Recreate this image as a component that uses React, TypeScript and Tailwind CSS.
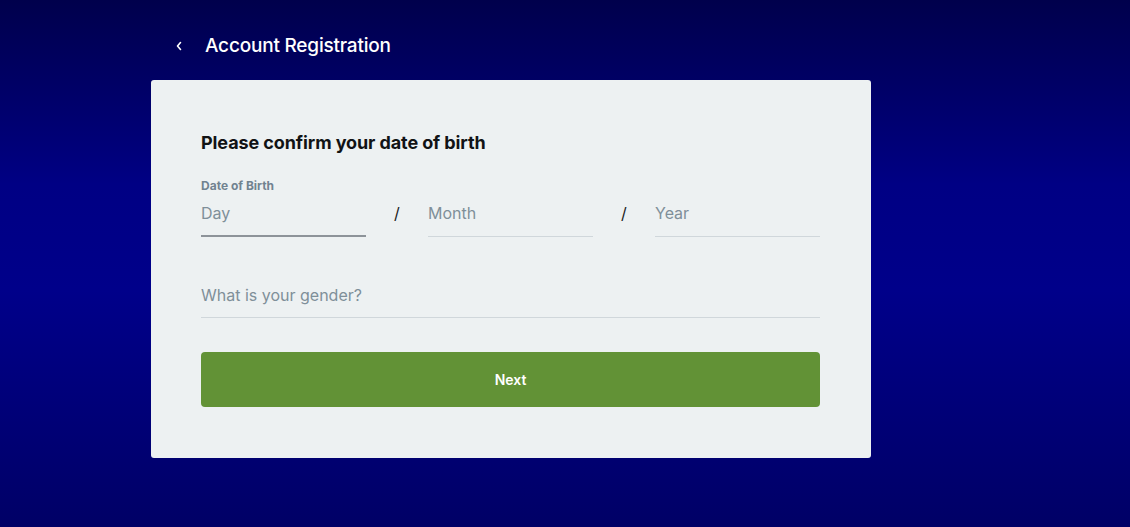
export default function App() {
  return (
    <div className="min-h-[527px] w-full bg-[linear-gradient(180deg,#00004c_0%,#000084_35%,#00008a_55%,#000066_100%)] font-['Inter',sans-serif]">
      <div className="ml-[151px] w-[720px] pt-[34px]">
        {/* Header */}
        <div className="flex h-[24px] items-center">
          <svg className="ml-[24px] h-[10px] w-[8px]" viewBox="0 0 8 10" fill="none">
            <path d="M5.5 1.5 L2.5 5 L5.5 8.5" stroke="white" strokeWidth="1.6" strokeLinecap="round" strokeLinejoin="round" />
          </svg>
          <h1 className="ml-[22px] text-[19px] font-medium leading-[24px] tracking-[-0.2px] text-white">
            Account Registration
          </h1>
        </div>

        {/* Card */}
        <div className="mt-[22px] rounded-[3px] bg-[#edf1f2] px-[50px] pt-[51px] pb-[51px]">
          <h2 className="text-[18px] font-bold leading-[24px] tracking-[-0.1px] text-[#111315]">
            Please confirm your date of birth
          </h2>

          <label className="mt-[23px] block pt-[1px] text-[12px] font-bold leading-[14px] text-[#718390]">
            Date of Birth
          </label>
          <div className="-mt-[1px] flex items-stretch">
            <input
              placeholder="Day"
              className="h-[45px] w-[165px] border-b-2 border-[#8d9399] bg-transparent pb-[2px] text-[16px] text-[#222] outline-none placeholder:text-[#7f8f99]"
            />
            <span className="flex w-[62px] items-center justify-center pb-[3px] text-[16px] text-[#222]">/</span>
            <input
              placeholder="Month"
              className="h-[45px] w-[165px] border-b border-[#d0d7db] bg-transparent pb-[2px] text-[16px] text-[#222] outline-none placeholder:text-[#7f8f99]"
            />
            <span className="flex w-[62px] items-center justify-center pb-[3px] text-[16px] text-[#222]">/</span>
            <input
              placeholder="Year"
              className="h-[45px] w-[165px] border-b border-[#d0d7db] bg-transparent pb-[2px] text-[16px] text-[#222] outline-none placeholder:text-[#7f8f99]"
            />
          </div>

          <input
            placeholder="What is your gender?"
            className="mt-[37px] block h-[44px] w-[619px] border-b border-[#d0d7db] bg-transparent pb-[2px] text-[16px] text-[#222] outline-none placeholder:text-[#7f8f99]"
          />

          <button className="mt-[34px] flex h-[55px] w-[619px] items-center justify-center rounded-[4px] bg-[#629236] text-[14px] font-semibold text-white">
            Next
          </button>
        </div>
      </div>
    </div>
  );
}
